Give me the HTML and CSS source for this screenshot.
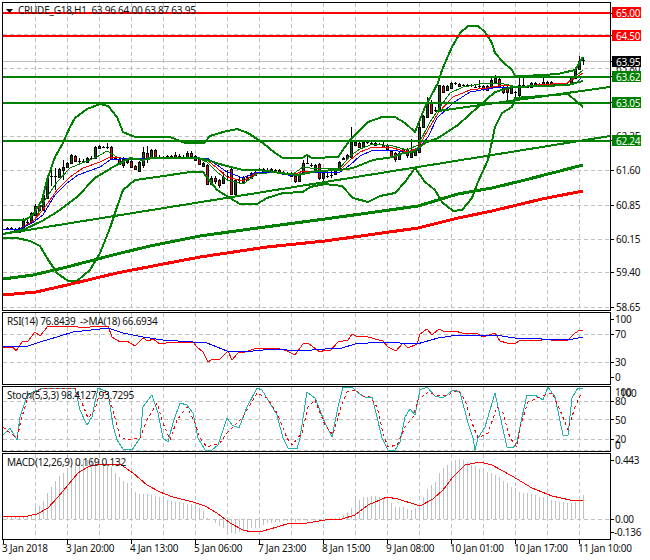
FILE: index.html
```html
<!DOCTYPE html>
<html lang="en">
<head>
    <meta charset="UTF-8">
    <title>CRUDE_G18,H1</title>
    <link rel="stylesheet" href="styles.css">
</head>
<body>
    <div class="chart">
        <!-- price window -->
        <svg class="pane pane-main" viewBox="0 0 650 311">
            <g class="vgrid" data-top="3" data-bottom="310"></g>
            <path class="grid" d="M3 34.5H610M3 68.5H610M3 102.5H610M3 136.5H610M3 170.5H610M3 205.5H610M3 239.5H610M3 272.5H610M3 307.5H610"/>
            <path class="bid" d="M3 61.5H610"/>
            <g id="candles"></g>

            <polyline class="thin green" points="35,220 43,203 57,182 70,168 82,163 97,157 107,151 117,157 130,160 150,159 197,158 207,162 217,172 227,180 243,184 257,174 277,172 293,174 303,167 317,169 340,168 350,156 360,149 373,144 393,146 407,150 418,145 430,122 440,107 450,93 463,87 480,84 500,83 517,87 567,83 577,75 583,70"/>
            <polyline class="thin red" points="3,229 20,229 33,221 43,210 57,190 70,177 83,168 100,162 110,157 130,159 150,158 197,158 207,160 217,168 227,177 243,181 257,173 277,172 293,175 303,171 317,171 340,170 350,160 360,152 373,147 393,148 407,152 418,148 428,130 438,113 453,97 470,90 487,88 503,85 517,87 537,85 567,83 575,78 583,73"/>
            <polyline class="thin blue" points="3,229 20,229 32,223 43,215 55,195 67,183 78,175 100,167 110,160 130,158 150,158 197,158 207,158 217,165 227,172 243,178 257,172 277,173 293,176 303,173 317,172 340,172 350,165 360,156 373,150 393,150 407,153 418,150 428,137 437,118 453,103 470,92 487,89 500,87 517,87 537,86 567,85 577,82 583,76"/>

            <polyline class="band" points="3,220 25,220 33,215 42,200 47,180 55,157 63,143 70,127 75,118 87,109 100,104 108,106 117,117 123,132 135,137 147,137 170,137 185,143 204,143 210,136 223,132 237,129 248,133 263,143 275,153 283,158 302,158 307,155 312,158 338,157 350,140 355,135 368,122 382,117 395,117 405,123 415,132 425,107 438,83 442,70 452,47 460,33 468,26 478,26 485,32 492,43 495,53 503,62 512,70 515,76 525,76 558,74 575,70 583,57"/>
            <polyline class="band" points="3,234 23,230 42,221 57,212 77,197 95,178 113,167 130,158 143,160 150,158 197,158 207,160 223,165 243,170 260,170 280,173 297,175 317,171 340,170 353,168 373,160 393,157 403,153 413,152 425,143 438,138 458,125 478,107 495,92 512,87 542,86 568,85 583,81"/>
            <polyline class="band" points="3,238 17,238 30,241 40,246 47,258 57,273 68,281 77,281 90,270 100,253 110,228 117,207 123,190 135,180 157,177 190,172 203,172 217,190 230,198 240,204 257,204 267,198 283,193 303,192 310,187 325,184 342,186 353,198 368,202 380,196 395,193 405,182 415,168 425,182 435,190 442,202 453,211 462,210 472,198 478,182 488,160 495,127 502,113 512,107 515,98 528,97 568,94 577,102 583,107"/>

            <polyline class="ma-wide green" points="3,279 33,275 67,267 113,255 150,246 200,236 250,229 325,219 368,213 418,206 458,194 492,188 525,180 583,165"/>
            <polyline class="ma-wide red" points="3,295 36,292 67,285 117,273 158,265 200,257 267,247 325,241 418,228 458,218 492,211 542,199 583,191"/>

            <path class="level green" d="M3 234L610 136M438 111L610 87"/>
            <path class="level green" d="M3 76.5H610M3 102.5H610M3 140.5H610"/>
            <path class="level red" d="M3 13H610M3 35.5H610"/>

            <path class="marker" d="M6 9H13L9.5 13Z"/>
            <text class="label" x="18" y="14">CRUDE_G18,H1&#160;&#160;63.96 64.00 63.87 63.95</text>

            <rect class="frame" x="2.5" y="2.5" width="608" height="308"/>
            <path class="tick" d="M611 13.5h3M611 35.5h3M611 61.5h3M611 76.5h3M611 102.5h3M611 140.5h3M611 170.5h3M611 205.5h3M611 239.5h3M611 272.5h3M611 307.5h3"/>

            <text class="label" x="616" y="72">63.80</text>
            <text class="label" x="616" y="140">62.35</text>
            <text class="label" x="616" y="174">61.60</text>
            <text class="label" x="616" y="209">60.85</text>
            <text class="label" x="616" y="243">60.15</text>
            <text class="label" x="616" y="276">59.40</text>
            <text class="label" x="616" y="311">58.65</text>

            <rect class="tag red" x="612" y="7" width="29" height="11"/>
            <text class="tag-text" x="616" y="16.5">65.00</text>
            <rect class="tag red" x="612" y="30" width="29" height="11"/>
            <text class="tag-text" x="616" y="39.5">64.50</text>
            <rect class="tag black" x="612" y="56" width="29" height="11"/>
            <text class="tag-text" x="616" y="65.5">63.95</text>
            <rect class="tag green" x="612" y="71" width="29" height="11"/>
            <text class="tag-text" x="616" y="80.5">63.62</text>
            <rect class="tag green" x="612" y="97" width="29" height="11"/>
            <text class="tag-text" x="616" y="106.5">63.05</text>
            <rect class="tag green" x="612" y="135" width="29" height="11"/>
            <text class="tag-text" x="616" y="144.5">62.24</text>
        </svg>

        <!-- RSI window -->
        <svg class="pane pane-rsi" viewBox="0 311 650 74">
            <g class="vgrid" data-top="313" data-bottom="384"></g>
            <path class="grid" d="M3 334.5H610M3 362.5H610"/>
            <polyline class="line red" points="3,347 13,347 16,351 22,342 28,341 35,332 40,336 48,326 68,326 78,327 90,327 108,326 112,337 120,342 127,341 135,346 143,338 148,341 153,339 160,344 173,342 193,342 197,347 203,352 208,362 213,359 220,359 228,351 232,360 238,353 245,352 257,348 277,348 287,351 295,355 303,344 308,343 313,347 320,352 325,350 330,351 338,342 348,340 352,334 358,337 365,336 375,339 383,341 388,347 396,351 403,343 408,348 417,344 420,334 427,329 432,335 439,329 445,332 455,331 462,333 472,333 478,334 483,337 495,333 500,341 507,343 515,344 520,340 538,341 545,339 558,341 568,340 575,333 580,330 583,331"/>
            <polyline class="line blue" points="3,346 28,346 40,342 57,337 73,332 100,329 108,328 123,333 143,337 163,340 193,342 207,343 227,351 253,351 273,349 300,351 325,349 342,348 355,344 382,342 417,344 438,338 458,335 495,335 515,338 542,339 568,340 583,337"/>
            <text class="label" x="7" y="325">RSI(14) 76.8439&#160;&#160;-&gt;MA(18) 66.6934</text>
            <rect class="frame" x="2.5" y="312.5" width="608" height="72"/>
            <path class="tick" d="M611 319.5h3M611 334.5h3M611 362.5h3M611 377.5h3"/>
            <text class="label" x="615" y="323">100</text>
            <text class="label" x="615" y="338">70</text>
            <text class="label" x="615" y="366">30</text>
            <text class="label" x="615" y="381">0</text>
        </svg>

        <!-- stochastic window -->
        <svg class="pane pane-stoch" viewBox="0 385 650 67">
            <g class="vgrid" data-top="387" data-bottom="451"></g>
            <path class="grid" d="M3 401.5H610M3 419.5H610M3 439.5H610M3 450.5H610"/>
            <polyline class="line teal" points="3,435 10,428 17,440 20,417 27,396 33,392 43,388 75,388 80,410 87,425 92,417 98,388 108,392 113,425 117,440 123,449 132,450 140,438 143,407 152,395 158,413 163,438 168,442 173,423 180,403 187,405 193,413 198,438 205,450 212,450 218,445 227,418 232,425 239,428 247,407 257,388 262,390 277,415 283,438 288,448 297,449 300,438 307,392 315,398 325,423 332,437 338,407 343,387 352,387 358,393 365,397 372,397 377,417 382,438 388,450 395,450 400,442 405,417 410,409 415,415 420,390 427,387 435,396 443,398 453,390 460,392 468,423 473,438 475,450 478,438 485,427 495,393 505,438 507,447 513,448 517,442 522,417 527,395 535,395 543,400 548,387 555,397 563,435 568,435 572,398 578,388 583,388"/>
            <polyline class="line red dashed" points="3,427 10,433 17,438 22,417 27,400 35,392 43,388 75,388 82,403 88,418 95,410 100,392 107,392 113,410 120,437 128,440 140,438 147,420 157,403 163,423 170,440 177,420 187,407 195,423 200,438 207,447 220,443 227,433 235,425 243,417 257,393 267,398 277,413 287,438 292,445 302,433 308,407 315,400 325,425 333,435 340,410 347,392 355,390 363,396 370,397 377,407 383,433 388,447 397,445 405,427 413,417 418,400 428,392 438,396 448,395 458,390 465,400 472,423 478,438 488,433 497,407 503,413 510,438 517,447 520,427 528,402 542,396 552,393 560,410 568,430 575,407 582,392"/>
            <text class="label" x="7" y="399">Stoch(5,3,3) 98.4127 93.7295</text>
            <rect class="frame" x="2.5" y="386.5" width="608" height="65"/>
            <path class="tick" d="M611 401.5h3M611 419.5h3M611 439.5h3"/>
            <text class="label" x="615" y="396">100</text>
            <text class="label" x="620" y="397">100</text>
            <text class="label" x="615" y="405">80</text>
            <text class="label" x="615" y="424">50</text>
            <text class="label" x="615" y="443">20</text>
            <text class="label" x="615" y="449">0</text>
        </svg>

        <!-- MACD window and time axis -->
        <svg class="pane pane-macd" viewBox="0 452 650 108">
            <g class="vgrid" data-top="454" data-bottom="539"></g>
            <path class="grid" d="M3 519.5H610"/>
            <g id="histogram"></g>
            <polyline class="line red" points="3,517 28,516 37,514 48,508 58,497 68,485 78,473 88,467 98,464 120,464 133,473 147,485 160,492 173,497 193,502 205,506 217,513 230,523 243,530 252,532 263,531 277,527 290,523 307,523 325,520 342,519 355,515 368,505 387,497 398,499 420,506 433,499 443,490 453,477 465,465 480,462 492,465 512,476 532,488 552,496 570,500 583,500"/>
            <text class="label" x="7" y="466">MACD(12,26,9) 0.169 0.132</text>
            <rect class="frame" x="2.5" y="453.5" width="608" height="86"/>
            <path class="tick" d="M611 460.5h3M611 519.5h3M611 532.5h3"/>
            <text class="label" x="615" y="464">0.443</text>
            <text class="label" x="615" y="523">0.00</text>
            <text class="label" x="614" y="536">-0.136</text>
            <g id="timeAxis"></g>
        </svg>
    </div>
    <script src="script.js"></script>
</body>
</html>
```

FILE: styles.css
```css
* {
    margin: 0;
    padding: 0;
    box-sizing: border-box;
}

body {
    background-color: white;
}

.chart {
    display: flex;
    flex-direction: column;
    width: 650px;
    height: 560px;
}

.pane {
    display: block;
    width: 650px;
    overflow: visible;
}

.pane-main { height: 311px; }
.pane-rsi { height: 74px; }
.pane-stoch { height: 67px; }
.pane-macd { height: 108px; }

polyline, path, line {
    fill: none;
    shape-rendering: crispEdges;
}

.grid, .vgrid line {
    stroke: #c0c0c0;
    stroke-width: 1;
    stroke-dasharray: 4 3;
}

.bid {
    stroke: #c0c0c0;
    stroke-width: 1;
}

.frame {
    fill: none;
    stroke: black;
    stroke-width: 1;
    shape-rendering: crispEdges;
}

.tick {
    stroke: black;
    stroke-width: 1;
}

.marker {
    fill: black;
    stroke: none;
    shape-rendering: auto;
}

.thin, .line { stroke-width: 1; }
.band, .level { stroke-width: 2; }
.ma-wide { stroke-width: 3; }

.band { stroke: #008000; }
polyline.green, path.green { stroke: #008000; }
polyline.red, path.red { stroke: #ff0000; }
polyline.blue { stroke: #0000ff; }
polyline.teal { stroke: #20b2aa; }

.dashed { stroke-dasharray: 3 3; }

.tag { shape-rendering: crispEdges; }
rect.red { fill: #ff0000; }
rect.green { fill: #008000; }
rect.black { fill: black; }

.label, .tag-text {
    font-family: "Noto Sans", sans-serif;
    font-size: 10px;
    letter-spacing: -0.25px;
}

.label { fill: #111; }
.tag-text { fill: white; }

.wick { stroke: black; stroke-width: 1; }
.body { stroke: black; stroke-width: 1; shape-rendering: crispEdges; }
.bull { fill: #006400; }
.bear { fill: #ff0000; }

.hist { stroke: #c0c0c0; stroke-width: 1; }
```

FILE: script.js
```js
// open, close, high, low as y pixels, one bar every 4px starting at x=7
const bars = [
    [228,228,227,229],[228,228,227,229],[229,232,228,233],[232,228,227,233],[230,221,218,231],[222,222,219,225],[222,213,212,223],[215,206,204,216],
    [205,210,203,212],[210,195,190,211],[198,178,177,199],[176,176,170,186],[176,176,168,190],[177,169,168,178],[170,167,160,180],[167,163,162,168],
    [163,155,154,164],[156,161,155,162],[161,161,158,164],[161,161,159,163],[162,158,157,163],[158,158,156,160],[158,147,146,159],[148,146,145,149],
    [147,147,146,148],[147,147,143,149],[147,159,146,160],[158,158,156,160],[159,164,158,165],[165,159,157,168],[162,159,158,164],[161,167,160,168],
    [166,169,165,170],[171,162,161,172],[165,152,147,168],[153,159,146,163],[158,150,149,159],[150,157,149,158],[157,157,155,159],[157,157,156,158],
    [158,156,155,159],[156,156,155,157],[155,157,152,158],[156,156,154,158],[157,157,155,158],[157,153,151,158],[153,156,151,157],[156,160,155,161],
    [159,164,158,165],[166,163,162,167],[165,184,164,185],[184,178,176,185],[178,181,176,184],[180,185,179,188],[183,177,172,184],[176,176,170,180],
    [169,194,168,195],[194,180,179,195],[180,180,176,183],[182,177,176,183],[180,177,175,181],[178,173,172,179],[175,172,171,176],[170,170,168,171],
    [169,172,168,173],[170,170,168,172],[172,169,168,173],[170,170,169,171],[170,173,169,174],[172,172,171,173],[173,173,172,175],[173,176,172,177],
    [176,181,175,183],[181,175,174,182],[174,163,160,175],[163,163,155,164],[165,165,163,167],[170,165,164,171],[164,178,163,180],[178,173,172,184],
    [176,176,172,178],[175,175,171,178],[174,169,168,175],[169,162,161,170],[159,158,157,160],[158,155,154,159],[157,140,127,158],[145,142,140,146],
    [143,147,142,148],[147,142,141,148],[142,142,140,144],[143,143,141,144],[145,143,142,146],[144,144,143,145],[145,147,140,148],[145,149,144,150],
    [151,157,150,158],[153,159,152,162],[159,153,152,160],[151,149,148,152],[149,155,148,158],[157,152,139,158],[155,149,148,156],[152,127,122,153],
    [127,116,115,128],[117,103,97,118],[102,113,100,114],[110,110,107,112],[110,85,85,112],[86,92,85,93],[90,86,85,91],[88,83,82,89],
    [83,83,82,85],[84,86,83,87],[85,85,84,87],[85,85,84,87],[85,85,84,87],[87,87,85,88],[86,86,80,88],[89,86,85,91],
    [86,90,85,91],[88,80,78,89],[82,77,75,83],[79,87,78,88],[87,92,86,94],[87,92,86,102],[93,87,86,94],[92,92,91,98],
    [95,85,78,97],[85,85,78,88],[87,86,85,88],[87,83,82,88],[85,83,82,86],[84,84,83,85],[85,82,78,86],[84,82,81,85],
    [82,85,81,86],[85,84,83,86],[84,84,83,85],[84,84,83,85],[84,84,83,85],[84,77,76,85],[78,69,67,79],[69,61,56,70],
    [60,60,58,65]
];

// top of each MACD histogram bar, same spacing
const histogram = [
    517,517,517,517,517,517,516,507,506,501,493,487,481,476,473,469,
    465,463,461,460,460,459,459,459,463,465,467,473,477,481,483,488,
    492,494,494,494,495,496,497,498,500,501,502,502,503,504,504,506,
    508,511,518,519,523,526,528,531,533,534,532,530,529,528,528,526,
    525,523,523,522,522,521,521,523,522,521,520,521,520,521,519,519,
    519,518,518,517,515,512,508,500,500,497,497,496,496,497,499,499,
    503,507,507,507,509,510,508,503,497,489,485,482,473,468,465,462,
    460,459,460,462,465,466,469,470,472,473,475,477,481,483,487,488,
    492,493,493,494,495,497,497,499,500,501,502,502,503,503,502,500,
    495
];

const timeLabels = [
    '3 Jan 2018', '3 Jan 20:00', '4 Jan 13:00', '5 Jan 06:00', '7 Jan 23:00',
    '8 Jan 15:00', '9 Jan 08:00', '10 Jan 01:00', '10 Jan 17:00', '11 Jan 10:00'
];

document.querySelectorAll('.vgrid').forEach(group => {
    let lines = '';
    for (let x = 35; x <= 579; x += 32) {
        lines += `<line x1="${x + 0.5}" y1="${group.dataset.top}" x2="${x + 0.5}" y2="${group.dataset.bottom}"/>`;
    }
    group.innerHTML = lines;
});

document.getElementById('candles').innerHTML = bars.map(([open, close, high, low], i) => {
    const x = 7 + i * 4;
    const top = Math.min(open, close);
    const height = Math.abs(open - close);
    const wick = `<line class="wick" x1="${x + 0.5}" y1="${high}" x2="${x + 0.5}" y2="${low}"/>`;
    if (height === 0) {
        return wick + `<line class="wick" x1="${x - 1}" y1="${top + 0.5}" x2="${x + 2}" y2="${top + 0.5}"/>`;
    }
    const kind = close < open ? 'bull' : 'bear';
    return wick + `<rect class="body ${kind}" x="${x - 0.5}" y="${top + 0.5}" width="2" height="${height}"/>`;
}).join('');

document.getElementById('histogram').innerHTML = histogram.map((top, i) => {
    const x = 7.5 + i * 4;
    return `<line class="hist" x1="${x}" y1="519" x2="${x}" y2="${top}"/>`;
}).join('');

document.getElementById('timeAxis').innerHTML = timeLabels.map((text, i) => {
    const x = 3 + i * 64;
    return `<line class="tickline" stroke="black" x1="${x + 0.5}" y1="540" x2="${x + 0.5}" y2="544"/>` +
        `<text class="label" x="${x - 1}" y="552">${text}</text>`;
}).join('');
```
